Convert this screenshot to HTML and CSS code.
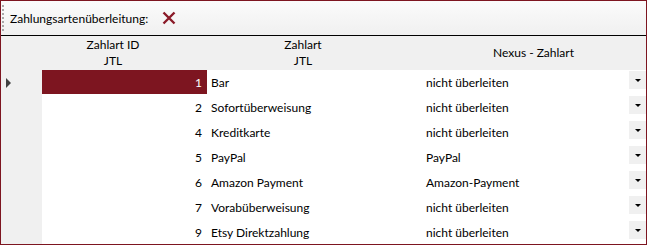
FILE: index.html
```html
<!DOCTYPE html>
<html lang="de">
<head>
    <meta charset="UTF-8">
    <title>Zahlungsartenüberleitung</title>
    <link rel="stylesheet" href="styles.css">
</head>
<body>

<div class="panel">
    <div class="toolbar">
        <span class="grip"></span>
        <span class="toolbar-label">Zahlungsartenüberleitung:</span>
        <span class="btn-clear">
            <svg width="14" height="14" viewBox="0 0 14 14">
                <path d="M1.5 1.5 L12.5 12.5 M12.5 1.5 L1.5 12.5" stroke="#8a1a28" stroke-width="2.4" fill="none"/>
            </svg>
        </span>
    </div>

    <div class="grid">
        <div class="grid-row grid-head">
            <div class="row-header"></div>
            <div class="cell col-id">Zahlart ID<br>JTL</div>
            <div class="cell col-name">Zahlart<br>JTL</div>
            <div class="cell col-nexus">Nexus - Zahlart</div>
        </div>

        <div class="grid-row current">
            <div class="row-header"><span class="row-arrow"></span></div>
            <div class="cell col-id">1</div>
            <div class="cell col-name">Bar</div>
            <div class="cell col-nexus"><span class="value">nicht überleiten</span><span class="combo-btn"></span></div>
        </div>
        <div class="grid-row">
            <div class="row-header"></div>
            <div class="cell col-id">2</div>
            <div class="cell col-name">Sofortüberweisung</div>
            <div class="cell col-nexus"><span class="value">nicht überleiten</span><span class="combo-btn"></span></div>
        </div>
        <div class="grid-row">
            <div class="row-header"></div>
            <div class="cell col-id">4</div>
            <div class="cell col-name">Kreditkarte</div>
            <div class="cell col-nexus"><span class="value">nicht überleiten</span><span class="combo-btn"></span></div>
        </div>
        <div class="grid-row">
            <div class="row-header"></div>
            <div class="cell col-id">5</div>
            <div class="cell col-name">PayPal</div>
            <div class="cell col-nexus"><span class="value">PayPal</span><span class="combo-btn"></span></div>
        </div>
        <div class="grid-row">
            <div class="row-header"></div>
            <div class="cell col-id">6</div>
            <div class="cell col-name">Amazon Payment</div>
            <div class="cell col-nexus"><span class="value">Amazon-Payment</span><span class="combo-btn"></span></div>
        </div>
        <div class="grid-row">
            <div class="row-header"></div>
            <div class="cell col-id">7</div>
            <div class="cell col-name">Vorabüberweisung</div>
            <div class="cell col-nexus"><span class="value">nicht überleiten</span><span class="combo-btn"></span></div>
        </div>
        <div class="grid-row">
            <div class="row-header"></div>
            <div class="cell col-id">9</div>
            <div class="cell col-name">Etsy Direktzahlung</div>
            <div class="cell col-nexus"><span class="value">nicht überleiten</span><span class="combo-btn"></span></div>
        </div>
    </div>
</div>

</body>
</html>
```

FILE: styles.css
```css
body, html {
    margin: 0;
    padding: 0;
    background: #fff;
}

.panel {
    width: 647px;
    height: 245px;
    box-sizing: border-box;
    border: 1px solid #7d1520;
    overflow: hidden;
    font-family: Lato, "Noto Sans", sans-serif;
    font-size: 12px;
    color: #000;
}

/* Werkzeugleiste oben */
.toolbar {
    height: 34px;
    display: flex;
    align-items: center;
    background: linear-gradient(#fbfbfb, #f0f0f0);
    border-bottom: 1px solid #000;
}

.grip {
    width: 2px;
    height: 26px;
    margin-left: 1px;
    background-image: linear-gradient(#a8a8a8 50%, transparent 50%);
    background-size: 2px 4px;
}

.toolbar-label {
    margin-left: 6px;
}

.btn-clear {
    display: flex;
    margin-left: 14px;
}

/* Tabelle */
.grid-row {
    display: flex;
    height: 25px;
}

.row-header {
    width: 41px;
    flex: none;
    background: #f0f0f0;
    display: flex;
    align-items: center;
}

.cell {
    flex: none;
    box-sizing: border-box;
    display: flex;
    align-items: center;
    white-space: nowrap;
}

.col-id {
    width: 165px;
    justify-content: flex-end;
    padding-right: 5px;
}

.col-name {
    width: 214px;
    padding-left: 4px;
}

.col-nexus {
    width: 225px;
    padding-left: 5px;
}

.col-nexus .value {
    flex: 1;
}

.grid-head {
    height: 34px;
    background: #f0f0f0;
    line-height: 16px;
}

.grid-head .cell {
    justify-content: center;
    text-align: center;
    padding: 0;
}

.grid-head .col-id { padding-right: 23px; }
.grid-head .col-name { padding-right: 22px; }

.current .col-id {
    background: #7d1520;
    color: #fff;
    height: 24px;
}

.row-arrow {
    margin-left: 5px;
    width: 0;
    height: 0;
    border-top: 5px solid transparent;
    border-bottom: 5px solid transparent;
    border-left: 5px solid #404040;
}

.combo-btn {
    align-self: flex-start;
    margin-top: 1px;
    width: 17px;
    height: 18px;
    background: #f0f0f0;
    display: flex;
    align-items: center;
    justify-content: center;
}

.combo-btn::after {
    content: "";
    border-left: 3px solid transparent;
    border-right: 3px solid transparent;
    border-top: 3px solid #000;
}
```
